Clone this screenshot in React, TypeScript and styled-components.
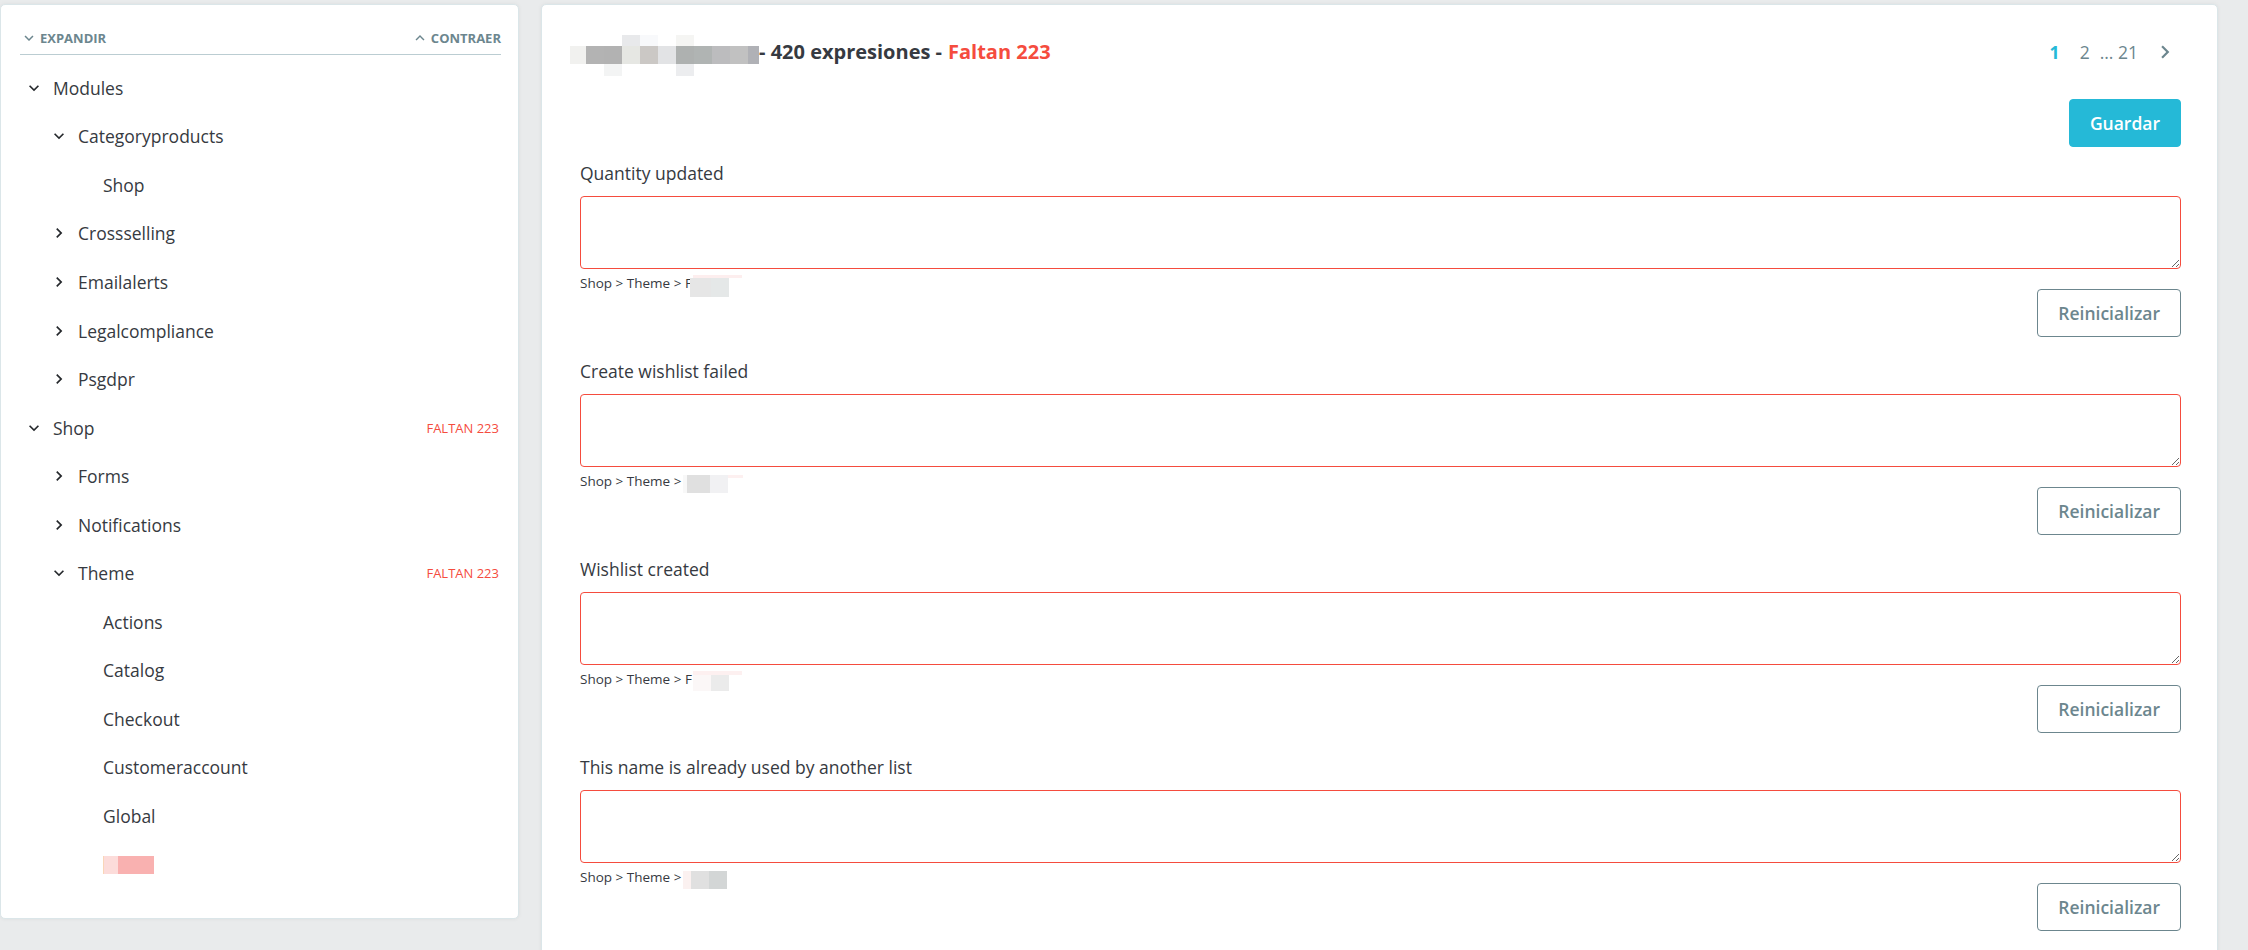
import React from 'react';
import styled, { createGlobalStyle } from 'styled-components';
import { MdKeyboardArrowDown, MdKeyboardArrowRight, MdKeyboardArrowUp } from 'react-icons/md';

const GlobalStyle = createGlobalStyle`
    html, body {
        margin: 0;
        padding: 0;
        background: #e9ebec;
        font-family: "Open Sans", "Noto Sans", sans-serif;
        color: #363a41;
    }
    * {
        box-sizing: border-box;
    }
`;

type Cell = [number, number, number, number, string];

interface TreeNode {
    label: string;
    level: number;
    icon?: 'down' | 'right';
    missing?: number;
    blurred?: boolean;
}

interface Expression {
    label: string;
    tail: string;
    cells: Cell[];
}

const TREE: TreeNode[] = [
    { label: 'Modules', level: 0, icon: 'down' },
    { label: 'Categoryproducts', level: 1, icon: 'down' },
    { label: 'Shop', level: 2 },
    { label: 'Crossselling', level: 1, icon: 'right' },
    { label: 'Emailalerts', level: 1, icon: 'right' },
    { label: 'Legalcompliance', level: 1, icon: 'right' },
    { label: 'Psgdpr', level: 1, icon: 'right' },
    { label: 'Shop', level: 0, icon: 'down', missing: 223 },
    { label: 'Forms', level: 1, icon: 'right' },
    { label: 'Notifications', level: 1, icon: 'right' },
    { label: 'Theme', level: 1, icon: 'down', missing: 223 },
    { label: 'Actions', level: 2 },
    { label: 'Catalog', level: 2 },
    { label: 'Checkout', level: 2 },
    { label: 'Customeraccount', level: 2 },
    { label: 'Global', level: 2 },
    { label: '', level: 2, blurred: true },
];

// pixelated bits of the screenshot, drawn as mosaics
const TITLE_CELLS: Cell[] = [
    [0, 11, 16, 18, '#f1f1ef'],
    [16, 11, 18, 18, '#b3b3b3'],
    [34, 11, 18, 18, '#b2b2b2'],
    [52, 11, 18, 18, '#e6e7e3'],
    [70, 11, 18, 18, '#cbc8c5'],
    [88, 11, 18, 18, '#e2e3e5'],
    [106, 11, 18, 18, '#aeb1b0'],
    [124, 11, 18, 18, '#b0b4b3'],
    [142, 11, 18, 18, '#bcbcbe'],
    [160, 11, 18, 18, '#c1c1c1'],
    [178, 11, 11, 18, '#b0b1b6'],
    [52, 0, 18, 11, '#e8e9eb'],
    [70, 0, 18, 11, '#f8f9fb'],
    [106, 0, 18, 11, '#f5f5f3'],
    [34, 29, 18, 12, '#f3f4f4'],
    [106, 29, 18, 12, '#ecedef'],
];

const EXPRESSIONS: Expression[] = [
    {
        label: 'Quantity updated',
        tail: 'F',
        cells: [
            [3, 0, 49, 3, '#fdeeee'],
            [0, 3, 21, 19, '#e6e6e6'],
            [21, 3, 18, 19, '#e5e8e8'],
        ],
    },
    {
        label: 'Create wishlist failed',
        tail: '',
        cells: [
            [0, 2, 4, 18, '#f8f8f8'],
            [4, 2, 23, 18, '#e0e0e0'],
            [27, 2, 18, 18, '#f1f1f3'],
            [45, 2, 15, 3, '#fdf0f0'],
        ],
    },
    {
        label: 'Wishlist created',
        tail: 'F',
        cells: [
            [3, 0, 49, 4, '#fdf0f0'],
            [3, 4, 18, 16, '#fbf7f7'],
            [21, 4, 18, 16, '#ebebeb'],
        ],
    },
    {
        label: 'This name is already used by another list',
        tail: '',
        cells: [
            [0, 2, 8, 18, '#fbf1f0'],
            [8, 2, 18, 18, '#e0e0e0'],
            [26, 2, 18, 18, '#d3d6d6'],
        ],
    },
];

const Page = styled.div`
    display: flex;
    align-items: flex-start;
    gap: 22px;
    width: 2218px;
    padding-top: 4px;
`;

const Card = styled.div`
    background: #fff;
    border: 1px solid #dbe6e9;
    border-radius: 5px;
    box-shadow: 0 0 4px rgba(0, 0, 0, 0.06);
`;

const Sidebar = styled(Card)`
    width: 519px;
    flex-shrink: 0;
    padding: 0 17px 29px 19px;
`;

const SidebarHeader = styled.div`
    display: flex;
    justify-content: space-between;
    align-items: center;
    padding: 23px 0 6px;
    border-bottom: 1px solid #bbcdd2;
`;

const HeaderLink = styled.span`
    display: inline-flex;
    align-items: center;
    gap: 2px;
    font-size: 13px;
    line-height: 20px;
    font-weight: 700;
    text-transform: uppercase;
    color: #6c868e;
`;

const Tree = styled.div`
    padding-top: 8.5px;
`;

const TreeRow = styled.div<{ $level: number }>`
    display: flex;
    align-items: center;
    height: 48.55px;
    padding-left: ${({ $level }) => 4 + $level * 25}px;
    font-size: 17.5px;
    color: #363a41;
`;

const IconSlot = styled.span`
    display: inline-flex;
    width: 20px;
    height: 20px;
    margin-right: 9px;
    flex-shrink: 0;
    color: #25282c;
`;

const TreeLabel = styled.span`
    flex: 1;
    display: flex;
    align-items: center;
`;

const Missing = styled.span`
    font-size: 13px;
    color: #f54c3e;
    padding-right: 2px;
`;

const Main = styled(Card)`
    flex: 1;
    padding: 33px 36px 40px 38px;
`;

const TitleRow = styled.div`
    display: flex;
    justify-content: space-between;
    align-items: center;
    height: 28px;
`;

const Title = styled.h2`
    margin: 0;
    display: flex;
    align-items: center;
    font-size: 20px;
    line-height: 28px;
    font-weight: 700;
    color: #363a41;
`;

const Mosaic = styled.svg`
    display: block;
    flex-shrink: 0;
`;

const TitleMosaic = styled(Mosaic)`
    margin-left: -10px;
    margin-top: 7px;
`;

const Danger = styled.span`
    color: #f54c3e;
    margin-left: 0.3em;
`;

const Pagination = styled.nav`
    display: flex;
    align-items: center;
    padding-right: 3px;
    font-size: 17.5px;
    color: #6c868e;
`;

const PageLink = styled.span<{ $active?: boolean; $gap: number }>`
    margin-right: ${({ $gap }) => $gap}px;
    color: ${({ $active }) => ($active ? '#25b9d7' : '#6c868e')};
    font-weight: ${({ $active }) => ($active ? 700 : 400)};
    line-height: 28px;
`;

const NextIcon = styled.span`
    display: inline-flex;
    color: #6c868e;
`;

const Actions = styled.div`
    display: flex;
    justify-content: flex-end;
    margin: 33px 0 14px;
`;

const Button = styled.button<{ $variant: 'primary' | 'outline' }>`
    height: 48px;
    padding: 0 20px;
    border-radius: 4px;
    font-family: "Open Sans", sans-serif;
    font-size: 17.5px;
    font-weight: 600;
    cursor: pointer;
    border: 1px solid ${({ $variant }) => ($variant === 'primary' ? '#25b9d7' : '#6c868e')};
    background: ${({ $variant }) => ($variant === 'primary' ? '#25b9d7' : '#fff')};
    color: ${({ $variant }) => ($variant === 'primary' ? '#fff' : '#6c868e')};
`;

const Block = styled.div`
    margin-bottom: 22px;
`;

const Label = styled.label`
    display: block;
    font-size: 17.5px;
    line-height: 24px;
    margin-bottom: 11px;
    color: #363a41;
`;

const TextArea = styled.textarea`
    display: block;
    width: 100%;
    height: 73px;
    border: 1px solid #f54c3e;
    border-radius: 4px;
    resize: vertical;
    font-family: "Open Sans", sans-serif;
    font-size: 17.5px;
    outline: none;
`;

const Footer = styled.div`
    display: flex;
    justify-content: space-between;
    align-items: flex-start;
`;

const Breadcrumb = styled.span`
    display: flex;
    align-items: flex-start;
    margin-top: 4px;
    font-size: 13.5px;
    line-height: 20px;
    color: #363a41;
    white-space: pre;
`;

const CrumbMosaic = styled(Mosaic)`
    margin-top: 2px;
    margin-left: -2px;
`;

const ResetButton = styled(Button)`
    margin-top: 20px;
`;

function Cells({ cells }: { cells: Cell[] }) {
    return (
        <>
            {cells.map(([x, y, w, h, fill], i) => (
                <rect key={i} x={x} y={y} width={w} height={h} fill={fill} />
            ))}
        </>
    );
}

function TreeItem({ node }: { node: TreeNode }) {
    return (
        <TreeRow $level={node.level}>
            <IconSlot>
                {node.icon === 'down' && <MdKeyboardArrowDown size={20} />}
                {node.icon === 'right' && <MdKeyboardArrowRight size={20} />}
            </IconSlot>
            <TreeLabel>
                {node.blurred ? (
                    <Mosaic width={52} height={18}>
                        <rect x={0} y={0} width={1} height={18} fill="#f9d6b8" />
                        <rect x={1} y={0} width={14} height={18} fill="#fcdcda" />
                        <rect x={15} y={0} width={36} height={18} fill="#f9b1b0" />
                    </Mosaic>
                ) : (
                    node.label
                )}
            </TreeLabel>
            {node.missing !== undefined && <Missing>FALTAN {node.missing}</Missing>}
        </TreeRow>
    );
}

function ExpressionBlock({ item }: { item: Expression }) {
    return (
        <Block>
            <Label>{item.label}</Label>
            <TextArea />
            <Footer>
                <Breadcrumb>
                    {`Shop > Theme > ${item.tail}`}
                    <CrumbMosaic width={60} height={22}>
                        <Cells cells={item.cells} />
                    </CrumbMosaic>
                </Breadcrumb>
                <ResetButton $variant="outline">Reinicializar</ResetButton>
            </Footer>
        </Block>
    );
}

export default function App() {
    return (
        <>
            <GlobalStyle />
            <Page>
                <Sidebar>
                    <SidebarHeader>
                        <HeaderLink>
                            <MdKeyboardArrowDown size={18} />
                            Expandir
                        </HeaderLink>
                        <HeaderLink>
                            <MdKeyboardArrowUp size={18} />
                            Contraer
                        </HeaderLink>
                    </SidebarHeader>
                    <Tree>
                        {TREE.map((node, i) => (
                            <TreeItem key={i} node={node} />
                        ))}
                    </Tree>
                </Sidebar>
                <Main>
                    <TitleRow>
                        <Title>
                            <TitleMosaic width={189} height={41}>
                                <Cells cells={TITLE_CELLS} />
                            </TitleMosaic>
                            - 420 expresiones -<Danger>Faltan 223</Danger>
                        </Title>
                        <Pagination>
                            <PageLink $active $gap={20}>1</PageLink>
                            <PageLink $gap={10}>2</PageLink>
                            <PageLink $gap={14}>... 21</PageLink>
                            <NextIcon>
                                <MdKeyboardArrowRight size={26} />
                            </NextIcon>
                        </Pagination>
                    </TitleRow>
                    <Actions>
                        <Button $variant="primary">Guardar</Button>
                    </Actions>
                    {EXPRESSIONS.map((item, i) => (
                        <ExpressionBlock key={i} item={item} />
                    ))}
                </Main>
            </Page>
        </>
    );
}
